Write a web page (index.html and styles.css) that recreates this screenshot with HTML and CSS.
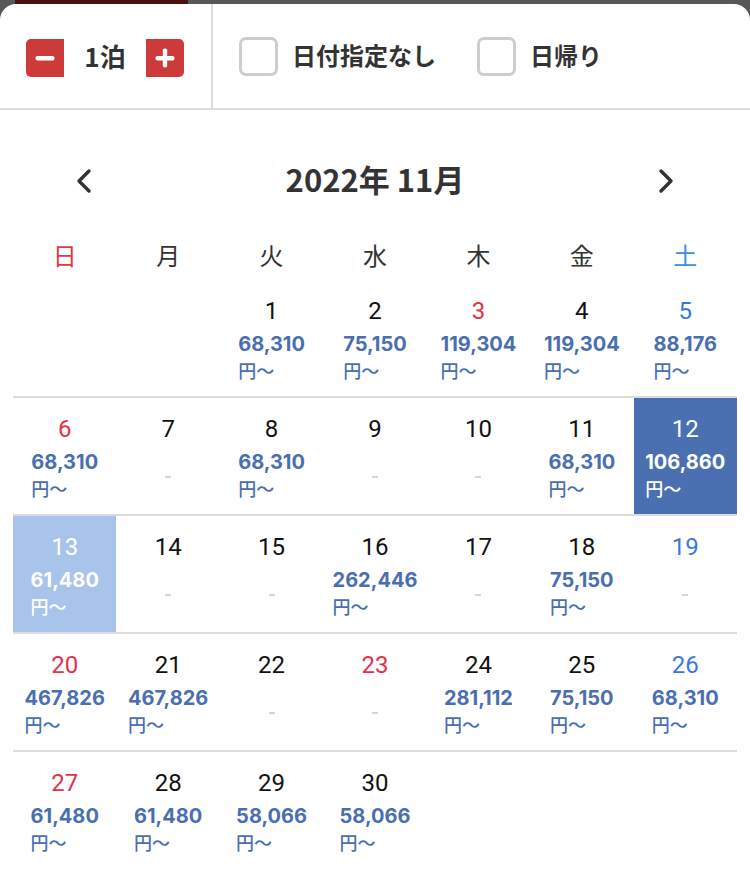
FILE: index.html
```html
<!DOCTYPE html>
<html lang="ja">
<head>
  <meta charset="UTF-8" />
  <title>日付を選択</title>
  <link rel="stylesheet" href="styles.css">
</head>
<body>
  <div class="backdrop"><span class="backdrop-tab"></span></div>

  <div class="sheet">
    <div class="toolbar">
      <div class="stepper">
        <button class="step-btn minus" aria-label="減らす">
          <svg width="20" height="20" viewBox="0 0 20 20"><rect x="0.5" y="8" width="19" height="4.4" rx="2" fill="#fff"/></svg>
        </button>
        <span class="nights">1泊</span>
        <button class="step-btn plus" aria-label="増やす">
          <svg width="20" height="20" viewBox="0 0 20 20"><rect x="0.5" y="8" width="19" height="4.4" rx="2" fill="#fff"/><rect x="7.8" y="0.5" width="4.4" height="19" rx="2" fill="#fff"/></svg>
        </button>
      </div>
      <label class="check"><span class="box"></span>日付指定なし</label>
      <label class="check"><span class="box"></span>日帰り</label>
    </div>

    <div class="calendar">
      <div class="cal-nav">
        <button class="nav-btn" aria-label="前の月">
          <svg width="20" height="26" viewBox="0 0 20 26"><polyline points="14,3 4,13 14,23" fill="none" stroke="#333" stroke-width="3.4" stroke-linecap="round" stroke-linejoin="round"/></svg>
        </button>
        <div class="cal-title">2022年 11月</div>
        <button class="nav-btn" aria-label="次の月">
          <svg width="20" height="26" viewBox="0 0 20 26"><polyline points="6,3 16,13 6,23" fill="none" stroke="#333" stroke-width="3.4" stroke-linecap="round" stroke-linejoin="round"/></svg>
        </button>
      </div>

      <div class="weekdays">
        <span class="sun">日</span>
        <span>月</span>
        <span>火</span>
        <span>水</span>
        <span>木</span>
        <span>金</span>
        <span class="sat">土</span>
      </div>

      <div id="weeks"></div>
    </div>
  </div>

  <script>
    // 2022/11/01 は火曜日
    const firstWeekday = 2;
    const daysInMonth = 30;
    const holidays = [3, 23];
    const checkIn = 12;
    const checkOut = 13;

    const prices = {
      1: '68,310', 2: '75,150', 3: '119,304', 4: '119,304', 5: '88,176',
      6: '68,310', 8: '68,310', 11: '68,310', 12: '106,860',
      13: '61,480', 16: '262,446', 18: '75,150',
      20: '467,826', 21: '467,826', 24: '281,112', 25: '75,150', 26: '68,310',
      27: '61,480', 28: '61,480', 29: '58,066', 30: '58,066'
    };

    function renderWeeks() {
      const wrap = document.getElementById('weeks');
      let row = null;

      for (let i = 0; i < firstWeekday + daysInMonth; i++) {
        if (i % 7 === 0) {
          row = document.createElement('div');
          row.className = 'week';
          wrap.appendChild(row);
        }

        const cell = document.createElement('div');
        cell.className = 'day';
        row.appendChild(cell);

        const d = i - firstWeekday + 1;
        if (d < 1) continue;

        const wd = i % 7;
        if (wd === 0 || holidays.includes(d)) cell.classList.add('sun');
        else if (wd === 6) cell.classList.add('sat');
        if (d === checkIn) cell.classList.add('check-in');
        if (d === checkOut) cell.classList.add('check-out');

        const num = document.createElement('div');
        num.className = 'day-num';
        num.textContent = d;
        cell.appendChild(num);

        if (prices[d]) {
          const price = document.createElement('div');
          price.className = 'price';
          price.innerHTML = '<span class="amount">' + prices[d] + '</span><span class="yen">円〜</span>';
          cell.appendChild(price);
        } else {
          const dash = document.createElement('div');
          dash.className = 'no-price';
          cell.appendChild(dash);
        }
      }
    }

    renderWeeks();
  </script>
</body>
</html>
```

FILE: styles.css
```css
body {
  margin: 0;
  background: #575757;
  font-family: "Noto Sans CJK JP", sans-serif;
  color: #333;
}
button {
  border: none;
  padding: 0;
  background: none;
  cursor: pointer;
}
.backdrop {
  height: 4px;
  display: flex;
}
.backdrop-tab {
  margin-left: 15px;
  width: 173px;
  background: #4a1111;
}
.sheet {
  background: #fff;
  border-radius: 16px 16px 0 0;
  min-height: 876px;
}

/* toolbar */
.toolbar {
  display: flex;
  align-items: center;
  height: 104px;
  border-bottom: 2px solid #dcdcdc;
}
.stepper {
  display: flex;
  align-items: center;
  align-self: stretch;
  width: 185px;
  padding-left: 26px;
  border-right: 2px solid #dcdcdc;
}
.step-btn {
  width: 38px;
  height: 38px;
  margin-top: 3px;
  background: #cd3a3a;
  display: flex;
  align-items: center;
  justify-content: center;
}
.step-btn.minus {
  border-radius: 5px 0 0 5px;
}
.step-btn.plus {
  border-radius: 0 5px 5px 0;
}
.nights {
  width: 82px;
  padding-bottom: 2px;
  text-align: center;
  font-size: 26px;
  font-weight: bold;
  color: #333;
}
.check {
  display: flex;
  align-items: center;
  gap: 14px;
  margin-left: 26px;
  padding-bottom: 3px;
  font-size: 24px;
  font-weight: bold;
  color: #333;
}
.check + .check {
  margin-left: 41px;
}
.box {
  width: 33px;
  height: 33px;
  margin-top: 3px;
  border: 3px solid #cdcdcd;
  border-radius: 7px;
}

/* calendar */
.calendar {
  padding: 41px 13px 0;
}
.cal-nav {
  display: flex;
  align-items: center;
  height: 60px;
  margin: 0 52px 20px;
}
.nav-btn {
  width: 40px;
  height: 40px;
  display: flex;
  align-items: center;
  justify-content: center;
}
.cal-title {
  flex: 1;
  padding-bottom: 6px;
  text-align: center;
  font-size: 31px;
  font-weight: bold;
  color: #333;
}
.weekdays {
  display: grid;
  grid-template-columns: repeat(7, 1fr);
  height: 49px;
  padding-bottom: 3px;
  box-sizing: border-box;
  align-items: center;
  text-align: center;
  font-size: 24px;
  color: #333;
}
.weekdays .sun {
  color: #e0393e;
}
.weekdays .sat {
  color: #3b8ee0;
}
.week {
  display: grid;
  grid-template-columns: repeat(7, 1fr);
  border-bottom: 2px solid #dcdcdc;
}
.week:last-child {
  border-bottom: none;
}
.day {
  height: 116px;
  box-sizing: border-box;
  padding-top: 17px;
  text-align: center;
}
.day-num {
  font-family: Roboto, "Noto Sans", sans-serif;
  font-size: 24px;
  line-height: 28px;
  color: #111;
}
.day.sun .day-num {
  color: #e6304a;
}
.day.sat .day-num {
  color: #3a78e0;
}
.price {
  display: inline-block;
  margin-top: 8px;
  text-align: left;
  color: #4a6fb0;
}
.price .amount {
  display: block;
  font-family: Inter, "Noto Sans", sans-serif;
  font-size: 20px;
  line-height: 23px;
  font-weight: bold;
}
.price .yen {
  display: block;
  font-size: 18px;
  line-height: 28px;
  font-weight: 500;
}
.no-price {
  width: 6px;
  height: 2px;
  margin: 33px auto 0;
  background: #d6d6d6;
}
.day.check-in {
  background: #4a70b1;
}
.day.check-out {
  background: #a8c4eb;
}
.day.check-in .day-num,
.day.check-in .price,
.day.check-out .day-num,
.day.check-out .price {
  color: #fff;
}
```
